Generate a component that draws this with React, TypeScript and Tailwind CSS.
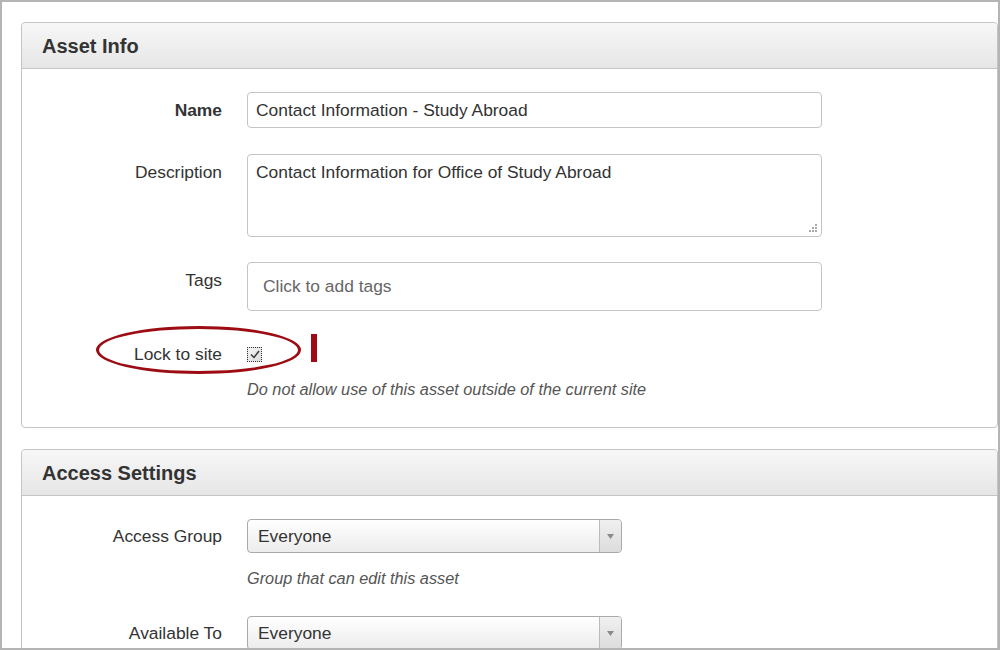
import React from "react";

const font = { fontFamily: '"Liberation Sans", Arial, sans-serif' };

function PanelHeader({ title }: { title: string }) {
  return (
    <div className="h-[46px] flex items-center pl-[20px] border-b border-[#c4c4c4] rounded-t-[4px] bg-gradient-to-b from-[#f7f7f7] to-[#e6e6e6]">
      <span className="text-[20px] font-bold text-[#333]">{title}</span>
    </div>
  );
}

function Label({ children, bold }: { children: React.ReactNode; bold?: boolean }) {
  return (
    <div
      className={`w-[200px] shrink-0 text-right text-[17.4px] leading-[20px] text-[#333] ${
        bold ? "font-bold" : ""
      }`}
    >
      {children}
    </div>
  );
}

function SelectBox({ value }: { value: string }) {
  return (
    <div className="w-[375px] h-[34px] flex border border-[#aaa] rounded-[4px] bg-gradient-to-b from-white to-[#ececec] overflow-hidden">
      <div className="flex-1 flex items-center pl-[10px] text-[17.4px] text-[#333]">
        {value}
      </div>
      <div className="w-[22px] border-l border-[#bbb] bg-gradient-to-b from-[#f0f0f0] to-[#dcdcdc] flex items-center justify-center">
        <svg width="7" height="5" viewBox="0 0 7 5">
          <path d="M0 0 L7 0 L3.5 5 Z" fill="#8a8a8a" />
        </svg>
      </div>
    </div>
  );
}

function ResizeGrip() {
  return (
    <svg width="10" height="10" viewBox="0 0 10 10" className="absolute right-[3px] bottom-[3px]">
      <rect x="7" y="1" width="2" height="2" fill="#aaa" />
      <rect x="4" y="4" width="2" height="2" fill="#aaa" />
      <rect x="7" y="4" width="2" height="2" fill="#aaa" />
      <rect x="1" y="7" width="2" height="2" fill="#aaa" />
      <rect x="4" y="7" width="2" height="2" fill="#aaa" />
      <rect x="7" y="7" width="2" height="2" fill="#aaa" />
    </svg>
  );
}

function AssetInfo() {
  return (
    <div className="relative w-[977px] border border-[#c4c4c4] rounded-[4px] bg-white">
      <PanelHeader title="Asset Info" />
      <div className="pt-[23px] pb-[28px]">
        <div className="flex items-center gap-[25px]">
          <Label bold>Name</Label>
          <div className="w-[575px] h-[36px] flex items-center pl-[8px] border border-[#c4c4c4] rounded-[4px] text-[17.4px] text-[#333]">
            Contact Information - Study Abroad
          </div>
        </div>

        <div className="flex items-start gap-[25px] mt-[26px]">
          <div className="pt-[8px]">
            <Label>Description</Label>
          </div>
          <div className="relative w-[575px] h-[83px] pl-[8px] pt-[7px] border border-[#c4c4c4] rounded-[4px] text-[17.4px] leading-[20px] text-[#333]">
            Contact Information for Office of Study Abroad
            <ResizeGrip />
          </div>
        </div>

        <div className="flex items-start gap-[25px] mt-[25px]">
          <div className="pt-[8px]">
            <Label>Tags</Label>
          </div>
          <div className="w-[575px] h-[49px] flex items-center pl-[15px] border border-[#c4c4c4] rounded-[4px] text-[17.4px] text-[#666]">
            Click to add tags
          </div>
        </div>

        <div className="relative flex items-center gap-[25px] mt-[33px] h-[20px]">
          <Label>Lock to site</Label>
          <div className="w-[15px] h-[15px] border border-dotted border-[#333] bg-gradient-to-br from-[#f4f4f4] to-[#dcdcdc] flex items-center justify-center">
            <svg width="10" height="9" viewBox="0 0 10 9">
              <path d="M1 4.5 L4 7.5 L9 1" stroke="#333" strokeWidth="1.4" fill="none" />
            </svg>
          </div>
          {/* annotation */}
          <div className="absolute left-[74px] top-[-18px] w-[205px] h-[48px] rounded-[50%] border-[3px] border-[#9c0c12]" />
          <div className="absolute left-[289px] top-[-10px] w-[6px] h-[28px] bg-[#9c0c12]" />
        </div>

        <div className="ml-[225px] mt-[15px] text-[16.3px] leading-[20px] italic text-[#555]">
          Do not allow use of this asset outside of the current site
        </div>
      </div>
    </div>
  );
}

function AccessSettings() {
  return (
    <div className="w-[977px] h-[240px] border border-[#c4c4c4] rounded-[4px] bg-white mt-[21px]">
      <PanelHeader title="Access Settings" />
      <div className="pt-[23px]">
        <div className="flex items-center gap-[25px]">
          <Label>Access Group</Label>
          <SelectBox value="Everyone" />
        </div>
        <div className="ml-[225px] mt-[15px] text-[16.3px] leading-[20px] italic text-[#555]">
          Group that can edit this asset
        </div>
        <div className="flex items-center gap-[25px] mt-[28px]">
          <Label>Available To</Label>
          <SelectBox value="Everyone" />
        </div>
      </div>
    </div>
  );
}

export default function App() {
  return (
    <div
      style={font}
      className="w-[1000px] h-[650px] overflow-hidden bg-white border-2 border-[#b4b4b4] pl-[19px] pt-[20px]"
    >
      <AssetInfo />
      <AccessSettings />
    </div>
  );
}
